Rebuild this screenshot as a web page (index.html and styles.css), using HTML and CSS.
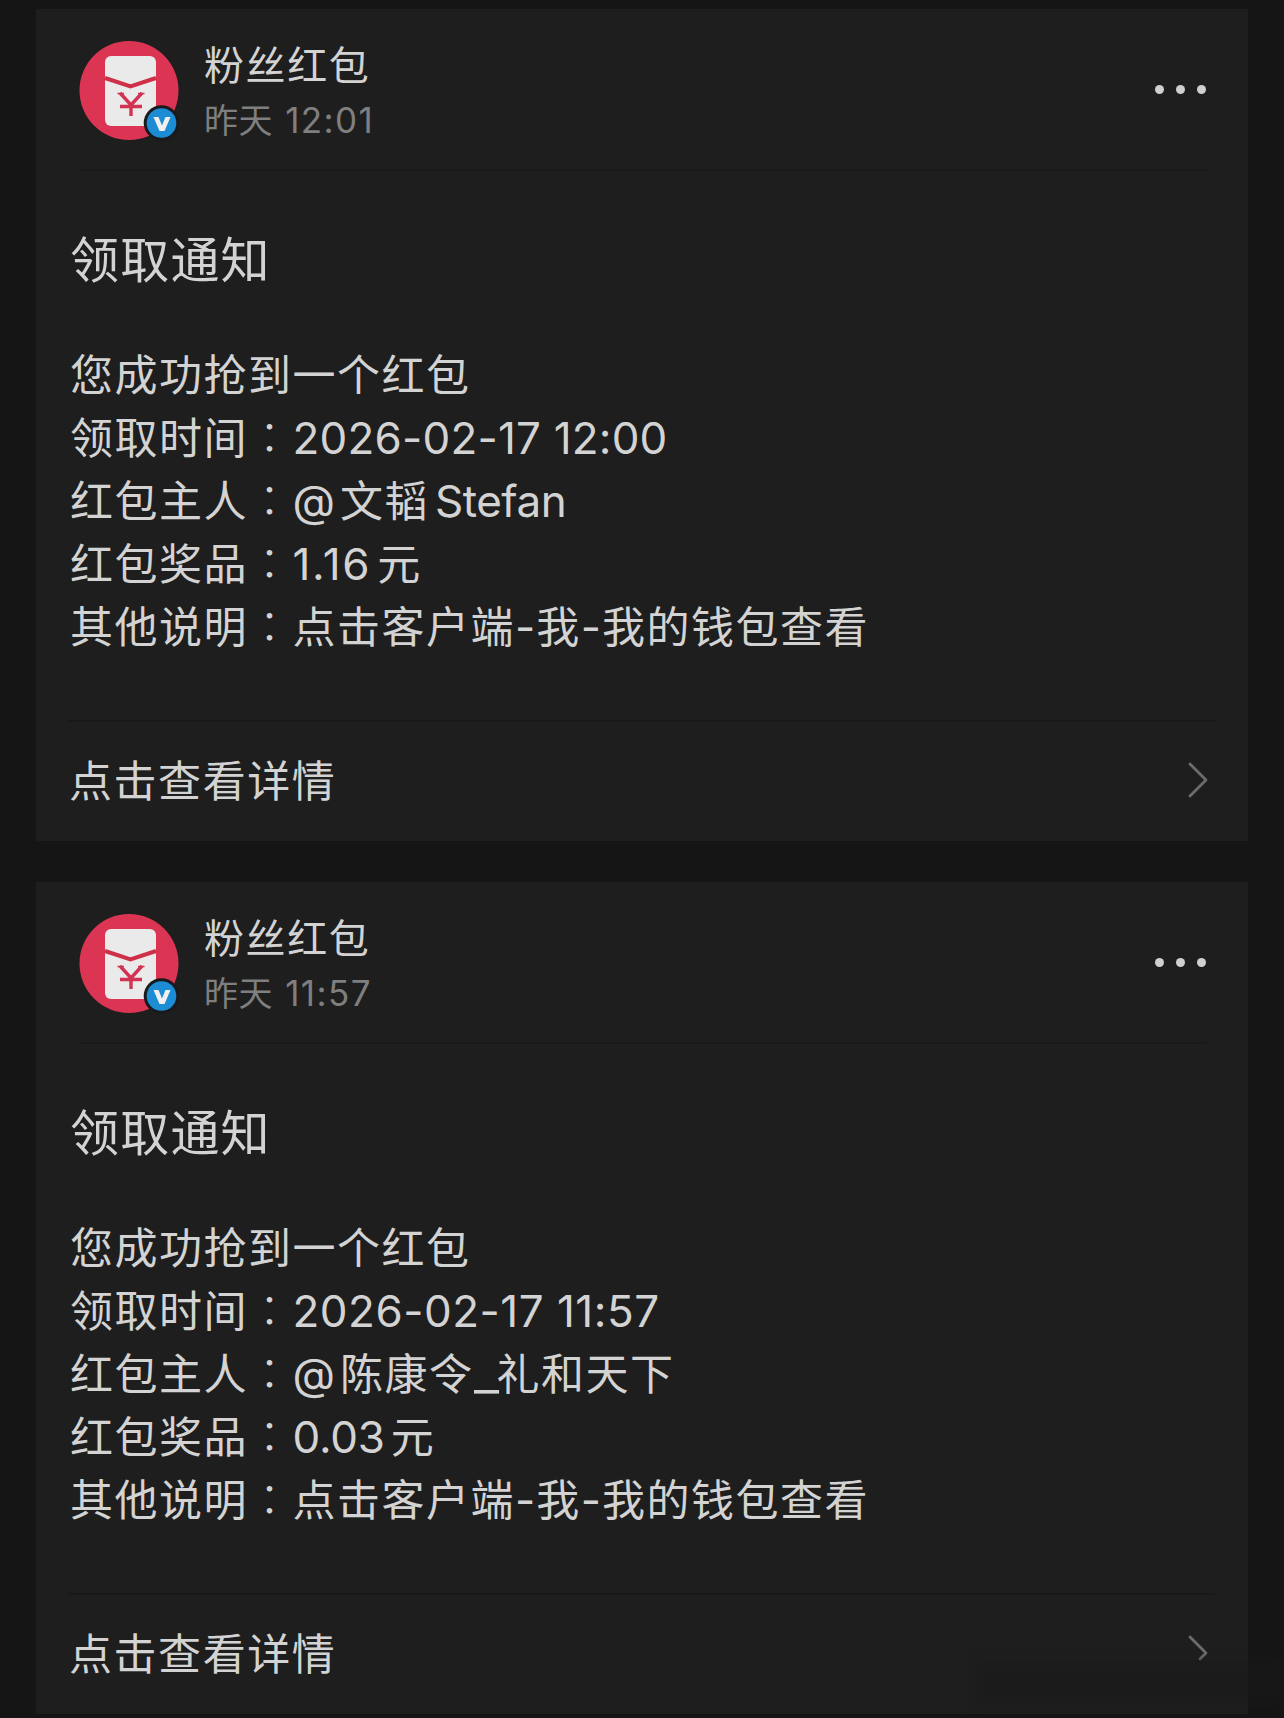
FILE: index.html
```html
<!DOCTYPE HTML>
<html lang="zh-CN">
<head>
<meta charset="utf-8" />
<title>粉丝红包</title>
<link rel="stylesheet" href="styles.css">
</head>
<body>
<div id="box">
	<div class="card">
		<div class="head">
			<svg class="avatar" width="100" height="100" viewBox="0 0 100 100">
				<circle cx="50" cy="49.5" r="49.5" fill="#dc3553"/>
				<rect x="26" y="15" width="51" height="70" rx="6" fill="#eaeaea"/>
				<path d="M26 37 L51.5 45.5 L77 37" fill="none" stroke="#cf3049" stroke-width="4"/>
				<path d="M41 52 L52 64 L63 52 M41 65.5 H63 M52 63 V75" fill="none" stroke="#d23352" stroke-width="3.4"/>
				<path d="M38.5 52.5 H45 M59 52.5 H65.5" stroke="#d23352" stroke-width="1.6"/>
				<circle cx="82.500" cy="82" r="17.800" fill="#191a1c"/>
				<circle cx="82.500" cy="82" r="14.800" fill="#1c8cd4"/>
				<path d="M74.500 76 H79.500 L83 84.500 L86.500 76 H91.500 L85.500 90 H80.500 Z" fill="#f0f0f0"/>
			</svg>
			<div class="info">
				<div class="name">粉丝红包</div>
				<div class="time">昨天<span class="en">12:01</span></div>
			</div>
			<div class="more"><i></i><i></i><i></i></div>
		</div>
		<div class="con">
			<h2>领取通知</h2>
			<ul>
				<li>您成功抢到一个红包</li>
				<li>领取时间<b lang="zh-TW">：</b><span class="en date">2026-02-17 12:00</span></li>
				<li>红包主人<b lang="zh-TW">：</b><span class="en at">@</span>文韬<span class="en user">Stefan</span></li>
				<li>红包奖品<b lang="zh-TW">：</b><span class="en num wide">1.16</span>元</li>
				<li>其他说明<b lang="zh-TW">：</b>点击客户端<span class="en line">-</span>我<span class="en line">-</span>我的钱包查看</li>
			</ul>
		</div>
		<a class="foot"><span>点击查看详情</span>
			<svg width="20" height="36" viewBox="0 0 20 36"><path d="M2 2 L18 18 L2 34"/></svg>
		</a>
	</div>
	<div class="card">
		<div class="head">
			<svg class="avatar" width="100" height="100" viewBox="0 0 100 100">
				<circle cx="50" cy="49.5" r="49.5" fill="#dc3553"/>
				<rect x="26" y="15" width="51" height="70" rx="6" fill="#eaeaea"/>
				<path d="M26 37 L51.5 45.5 L77 37" fill="none" stroke="#cf3049" stroke-width="4"/>
				<path d="M41 52 L52 64 L63 52 M41 65.5 H63 M52 63 V75" fill="none" stroke="#d23352" stroke-width="3.4"/>
				<path d="M38.5 52.5 H45 M59 52.5 H65.5" stroke="#d23352" stroke-width="1.6"/>
				<circle cx="82.500" cy="82" r="17.800" fill="#191a1c"/>
				<circle cx="82.500" cy="82" r="14.800" fill="#1c8cd4"/>
				<path d="M74.500 76 H79.500 L83 84.500 L86.500 76 H91.500 L85.500 90 H80.500 Z" fill="#f0f0f0"/>
			</svg>
			<div class="info">
				<div class="name">粉丝红包</div>
				<div class="time">昨天<span class="en">11:57</span></div>
			</div>
			<div class="more"><i></i><i></i><i></i></div>
		</div>
		<div class="con">
			<h2>领取通知</h2>
			<ul>
				<li>您成功抢到一个红包</li>
				<li>领取时间<b lang="zh-TW">：</b><span class="en date wide">2026-02-17 11:57</span></li>
				<li>红包主人<b lang="zh-TW">：</b><span class="en at">@</span>陈康令<span class="en under">_</span>礼和天下</li>
				<li>红包奖品<b lang="zh-TW">：</b><span class="en num">0.03</span>元</li>
				<li>其他说明<b lang="zh-TW">：</b>点击客户端<span class="en line">-</span>我<span class="en line">-</span>我的钱包查看</li>
			</ul>
		</div>
		<a class="foot"><span>点击查看详情</span>
			<svg width="20" height="36" viewBox="0 0 20 36"><path d="M2 2 L18 18 L12 24"/></svg>
		</a>
		<div class="smudge"></div>
	</div>
</div>
</body>
</html>
```
FILE: styles.css
```css
*{ padding:0; margin:0; border:0; list-style-type:none; box-sizing:border-box;}
body{ background:#151515; color:#d3d3d3; font-family:"Noto Sans CJK SC",sans-serif; height:1718px; overflow:hidden;}
#box{ width:1212px; margin-left:36px; padding-top:9px;}
.card{ position:relative; height:832px; margin-bottom:41px; background:#1e1e1e;}
.en{ font-family:Inter,sans-serif;}

.head{ display:flex; align-items:center; height:162px; margin:0 41px 0 43px; border-bottom:2px solid #191919;}
.head .avatar{ display:block; width:100px; height:100px; margin-top:3px;}
.head .info{ flex:1; margin-left:25px; padding-top:1px;}
.head .name{ height:56px; line-height:56px; font-size:40px; letter-spacing:1.6px;}
.head .time{ height:54px; line-height:54px; padding-top:1px; font-size:34px; letter-spacing:0.6px; color:#7f7f7f;}
.head .time .en{ margin-left:12px; font-size:35px; letter-spacing:1.4px;}
.head .more{ display:flex; gap:12px; margin:1px 1px 0 0;}
.head .more i{ width:9px; height:9px; border-radius:50%; background:#d0d0d0;}

.con{ height:549px; padding:51px 0 0 34px;}
.con h2{ height:70px; line-height:70px; font-size:49px; font-weight:400; letter-spacing:1.2px;}
.con ul{ padding-top:49px;}
.con li{ height:63px; line-height:63px; font-size:43px; letter-spacing:1.5px; white-space:nowrap;}
.con li b{ font-family:"Noto Sans CJK TC",sans-serif; font-weight:300;}
.con li .en{ font-size:44px; letter-spacing:0;}
.con li .date{ letter-spacing:0.2px;}
.con li .date.wide{ letter-spacing:0.5px;}
.con li .at{ margin-right:5px;}
.con li .user{ margin-left:6px; letter-spacing:-0.5px;}
.con li .num{ margin-right:6px; letter-spacing:-0.2px;}
.con li .num.wide{ letter-spacing:1.7px;}
.con li .line{ margin-right:1px;}
.con li .under{ display:inline-block; margin-right:3px; transform:scaleX(1.25); transform-origin:left;}

.foot{ display:flex; align-items:center; justify-content:space-between; height:121px; margin:0 33px 0 33px; padding:0 7px 0 0; border-top:2px solid #181818; font-size:43px; letter-spacing:1.55px;}
.foot span{ padding-bottom:7px;}
.foot svg{ margin-bottom:3px; fill:none; stroke:#6c6c6c; stroke-width:2.8; stroke-linecap:round; stroke-linejoin:round;}
.smudge{ position:absolute; right:-36px; bottom:8px; width:310px; height:46px; background:#1a1a1a; opacity:0.5; filter:blur(5px);}
```
